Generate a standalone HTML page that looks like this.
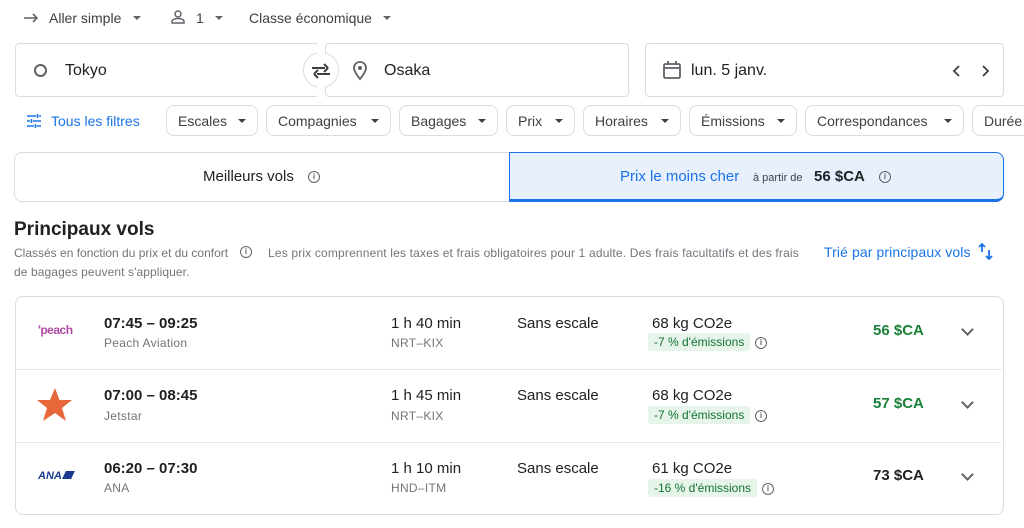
<!DOCTYPE html>
<html><head><meta charset="utf-8"><style>
*{box-sizing:border-box;margin:0;padding:0}
body{width:1024px;height:528px;background:#fff;font-family:"Liberation Sans",Arial,sans-serif;color:#202124;position:relative;overflow:hidden}
.a{position:absolute;white-space:nowrap}
.caret{position:absolute;width:0;height:0;border-left:4px solid transparent;border-right:4px solid transparent;border-top:4px solid #5f6368}
.box{position:absolute;border:1px solid #dadce0;border-radius:4px;height:54px;top:43px}
.chip{position:absolute;top:105px;height:31px;border:1px solid #dadce0;border-radius:8px;font-size:14px;color:#3c4043;padding:7px 0 0 11px}
.chip .caret{top:13px;right:11px;border-top-color:#3c4043}
.t{font-size:15px;color:#202124}
.s{font-size:12px;color:#70757a;letter-spacing:.3px}
.hr{position:absolute;left:16px;width:986px;height:1px;background:#e8eaed}
.em{position:absolute;background:#e6f4ea;color:#137333;font-size:12px;padding:2px 6px;border-radius:3px}
.info{position:absolute;width:12px;height:12px;border:1px solid #5f6368;border-radius:50%;font-size:8px;line-height:10px;text-align:center;color:#5f6368;font-weight:bold}
.chev{position:absolute;width:9px;height:9px;border-right:2px solid #5f6368;border-bottom:2px solid #5f6368;transform:rotate(45deg)}
</style></head><body>
<svg class="a" style="left:23px;top:12px" width="16" height="12"><path d="M1 6H14M10 2L14 6L10 10" stroke="#5f6368" stroke-width="1.6" fill="none"/></svg>
<div class="a t" style="left:49px;top:10px;font-size:14px;color:#3c4043">Aller simple</div>
<div class="caret" style="left:133px;top:16px"></div>
<svg class="a" style="left:170px;top:9px" width="16" height="16"><circle cx="8" cy="5" r="3" stroke="#5f6368" stroke-width="1.5" fill="none"/><path d="M2 14V12.5C2 10.5 5 9.5 8 9.5S14 10.5 14 12.5V14Z" stroke="#5f6368" stroke-width="1.5" fill="none"/></svg>
<div class="a t" style="left:196px;top:10px;font-size:14px;color:#3c4043">1</div>
<div class="caret" style="left:215px;top:16px"></div>
<div class="a t" style="left:249px;top:10px;font-size:14px;color:#3c4043">Classe économique</div>
<div class="caret" style="left:383px;top:16px"></div>

<div class="box" style="left:15px;width:304px"></div>
<div class="box" style="left:325px;width:304px"></div>
<div class="a" style="left:303px;top:52px;width:36px;height:36px;border-radius:50%;background:#fff;border:1px solid #dadce0"></div>
<div class="a" style="left:317px;top:44px;width:8px;height:52px;background:#fff"></div>
<svg class="a" style="left:310px;top:61px" width="22" height="20"><path d="M7 13H20M4 13L8 9M4 13L8 17M2 7H15M18 7L14 3M18 7L14 11" stroke="#3c4043" stroke-width="2" fill="none"/></svg>
<div class="a" style="left:34px;top:64px;width:13px;height:13px;border:2.5px solid #5f6368;border-radius:50%"></div>
<div class="a t" style="left:65px;top:62px;font-size:16px">Tokyo</div>
<svg class="a" style="left:351px;top:60px" width="18" height="22"><path d="M9 2C5 2 3 5 3 8C3 12 9 19 9 19S15 12 15 8C15 5 13 2 9 2Z" stroke="#5f6368" stroke-width="1.8" fill="none"/><circle cx="9" cy="8" r="2" fill="#5f6368"/></svg>
<div class="a t" style="left:384px;top:62px;font-size:16px">Osaka</div>
<div class="box" style="left:645px;width:359px"></div>
<svg class="a" style="left:662px;top:60px" width="20" height="20"><rect x="2" y="4" width="16" height="14" rx="1.5" stroke="#5f6368" stroke-width="1.8" fill="none"/><path d="M2 8H18M6 1V5M14 1V5" stroke="#5f6368" stroke-width="1.8"/></svg>
<div class="a t" style="left:691px;top:62px;font-size:16px">lun. 5 janv.</div>
<svg class="a" style="left:949px;top:63px" width="44" height="16"><path d="M10 3L5 8L10 13M34 3L39 8L34 13" stroke="#3c4043" stroke-width="1.8" fill="none"/></svg>

<svg class="a" style="left:26px;top:113px" width="16" height="16"><path d="M1 3H10M13 3H15M1 8H4M7 8H15M1 13H8M11 13H15M11.5 1V5M5.5 6V10M9.5 11V15" stroke="#1a73e8" stroke-width="1.6" fill="none"/></svg>
<div class="a" style="left:51px;top:113px;font-size:14px;color:#1a73e8">Tous les filtres</div>
<div class="chip" style="left:166px;width:92px">Escales<div class="caret"></div></div>
<div class="chip" style="left:266px;width:125px">Compagnies<div class="caret"></div></div>
<div class="chip" style="left:399px;width:99px">Bagages<div class="caret"></div></div>
<div class="chip" style="left:506px;width:69px">Prix<div class="caret"></div></div>
<div class="chip" style="left:583px;width:98px">Horaires<div class="caret"></div></div>
<div class="chip" style="left:689px;width:108px">Émissions<div class="caret"></div></div>
<div class="chip" style="left:805px;width:159px">Correspondances<div class="caret"></div></div>
<div class="chip" style="left:972px;width:80px">Durée</div>

<div class="a" style="left:14px;top:152px;width:496px;height:50px;border:1px solid #dadce0;border-right:none;border-radius:8px 0 0 8px"></div>
<div class="a" style="left:203px;top:168px;font-size:15px">Meilleurs vols</div>
<div class="info" style="left:308px;top:171px">i</div>
<div class="a" style="left:509px;top:152px;width:495px;height:50px;border:1px solid #1a73e8;border-bottom:3px solid #1a73e8;border-radius:0 8px 8px 0;background:#e8f0fe"></div>
<div class="a" style="left:620px;top:168px;font-size:15px;color:#1a73e8">Prix le moins cher</div>
<div class="a" style="left:753px;top:172px;font-size:11px;color:#3c4043">à partir de</div>
<div class="a" style="left:814px;top:168px;font-size:15px;font-weight:bold">56 $CA</div>
<div class="info" style="left:879px;top:171px">i</div>

<div class="a" style="left:14px;top:219px;font-size:19px;font-weight:bold">Principaux vols</div>
<div class="a s" style="left:14px;top:246px;letter-spacing:0">Classés en fonction du prix et du confort</div>
<div class="info" style="left:240px;top:246px">i</div>
<div class="a s" style="left:268px;top:246px;letter-spacing:.17px">Les prix comprennent les taxes et frais obligatoires pour 1 adulte. Des frais facultatifs et des frais</div>
<div class="a s" style="left:14px;top:265px;letter-spacing:.1px">de bagages peuvent s'appliquer.</div>
<div class="a" style="left:824px;top:244px;font-size:14px;color:#1a73e8;letter-spacing:.1px">Trié par principaux vols</div>
<svg class="a" style="left:977px;top:242px" width="16" height="20"><path d="M5 10V2M2 5L5 2L8 5M12 8V17M9 14L12 17L15 14" stroke="#1a73e8" stroke-width="1.8" fill="none"/></svg>

<div class="a" style="left:15px;top:296px;width:989px;height:219px;border:1px solid #dadce0;border-radius:8px"></div>
<div class="hr" style="top:369px"></div>
<div class="hr" style="top:442px"></div>

<div class="a" style="left:38px;top:323px;font-size:12px;color:#b04aa5;font-weight:bold;letter-spacing:-.5px">'peach</div>
<div class="a t" style="left:104px;top:315px;font-weight:bold">07:45 – 09:25</div>
<div class="a s" style="left:104px;top:336px">Peach Aviation</div>
<div class="a t" style="left:391px;top:315px">1 h 40 min</div>
<div class="a s" style="left:391px;top:336px">NRT–KIX</div>
<div class="a t" style="left:517px;top:315px">Sans escale</div>
<div class="a t" style="left:652px;top:315px">68 kg CO2e</div>
<div class="em" style="left:648px;top:333px">-7 % d'émissions</div>
<div class="info" style="left:755px;top:337px">i</div>
<div class="a t" style="left:873px;top:322px;font-weight:bold;color:#188038">56 $CA</div>
<div class="chev" style="left:963px;top:325px"></div>

<svg class="a" style="left:37px;top:388px" width="36" height="34"><path d="M18 0L22.5 12H35L25 20L29 33L18 25L6 33L10 20L0 12H13Z" fill="#e5673a"/></svg>
<div class="a t" style="left:104px;top:387px;font-weight:bold">07:00 – 08:45</div>
<div class="a s" style="left:104px;top:409px">Jetstar</div>
<div class="a t" style="left:391px;top:387px">1 h 45 min</div>
<div class="a s" style="left:391px;top:409px">NRT–KIX</div>
<div class="a t" style="left:517px;top:387px">Sans escale</div>
<div class="a t" style="left:652px;top:387px">68 kg CO2e</div>
<div class="em" style="left:648px;top:406px">-7 % d'émissions</div>
<div class="info" style="left:755px;top:410px">i</div>
<div class="a t" style="left:873px;top:395px;font-weight:bold;color:#188038">57 $CA</div>
<div class="chev" style="left:963px;top:398px"></div>

<div class="a" style="left:38px;top:470px;font-size:11px;color:#1b3d91;font-weight:bold;font-style:italic">ANA<span style="display:inline-block;width:9px;height:8px;background:#1b3d91;transform:skewX(-25deg);margin-left:2px"></span></div>
<div class="a t" style="left:104px;top:460px;font-weight:bold">06:20 – 07:30</div>
<div class="a s" style="left:104px;top:481px">ANA</div>
<div class="a t" style="left:391px;top:460px">1 h 10 min</div>
<div class="a s" style="left:391px;top:481px">HND–ITM</div>
<div class="a t" style="left:517px;top:460px">Sans escale</div>
<div class="a t" style="left:652px;top:460px">61 kg CO2e</div>
<div class="em" style="left:648px;top:479px">-16 % d'émissions</div>
<div class="info" style="left:762px;top:483px">i</div>
<div class="a t" style="left:873px;top:467px;font-weight:bold">73 $CA</div>
<div class="chev" style="left:963px;top:470px"></div>
</body></html>
